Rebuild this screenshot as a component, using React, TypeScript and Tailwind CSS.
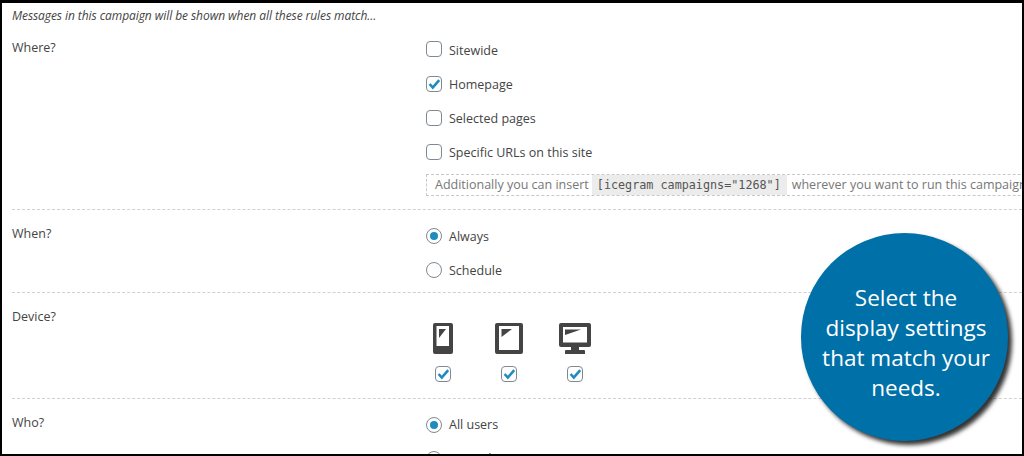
const font = { fontFamily: '"Open Sans", "Noto Sans", sans-serif' };

function Box({ checked }: { checked?: boolean }) {
  return (
    <span className="relative block w-4 h-4 shrink-0 rounded-[4px] border border-[#7e8993] bg-white">
      {checked && (
        <svg viewBox="0 0 16 16" className="absolute -left-px -top-px w-4 h-4">
          <path d="M3.6 8 L6.8 11.6 L13.2 4.2" fill="none" stroke="#1e8cbe" strokeWidth="2.6" />
        </svg>
      )}
    </span>
  );
}

function Radio({ checked }: { checked?: boolean }) {
  return (
    <span className="flex items-center justify-center w-4 h-4 shrink-0 rounded-full border border-[#7e8993] bg-white">
      {checked && <span className="block w-2 h-2 rounded-full bg-[#1e8cbe]" />}
    </span>
  );
}

function Opt({ label, children, textClass = "pt-[2px]", rowClass = "h-[34px]" }: { label: string; children: React.ReactNode; textClass?: string; rowClass?: string }) {
  return (
    <div className={`flex items-center gap-[7px] ${rowClass}`}>
      {children}
      <span className={textClass}>{label}</span>
    </div>
  );
}

function Row({ label, children, className, labelClass = "pt-[6px]" }: { label: string; children: React.ReactNode; className: string; labelClass?: string }) {
  return (
    <div className={`flex border-b border-dashed border-[#d0d0d0] ${className}`}>
      <div className={`w-[414px] shrink-0 ${labelClass}`}>{label}</div>
      <div className="min-w-0 flex-1">{children}</div>
    </div>
  );
}

export default function App() {
  return (
    <div
      style={font}
      className="relative w-[1024px] h-[456px] overflow-hidden bg-white border-2 border-t-[3px] border-black text-[12.5px] leading-[18px] text-[#444]"
    >
      <div className="w-[1100px] pl-[10px]">
        <div className="pt-[4px] h-[28px] italic text-[12px] tracking-[-0.07px]">Messages in this campaign will be shown when all these rules match...</div>
        <Row label="Where?" className="h-[179px] pt-px" labelClass="pt-[7px]">
          <Opt label="Sitewide" textClass="pt-[4px]" rowClass="h-[35px] pb-px"><Box /></Opt>
          <Opt label="Homepage"><Box checked /></Opt>
          <Opt label="Selected pages"><Box /></Opt>
          <Opt label="Specific URLs on this site"><Box /></Opt>
          <div className="mt-[5px] flex items-center h-[22px] w-[700px] border border-dashed border-[#c8c8c8] pl-[8px] text-[#777] whitespace-nowrap">
            Additionally you can insert
            <code className="ml-[3px] mr-[5px] pl-[5px] pr-[6px] h-[20px] leading-[20px] bg-[#ececec] text-[#555] text-[11.75px]" style={{ fontFamily: '"DejaVu Sans Mono", monospace' }}>
              [icegram campaigns="1268"]
            </code>
            wherever you want to run this campaign.
          </div>
        </Row>
        <Row label="When?" className="h-[83px] pt-[9px]">
          <Opt label="Always"><Radio checked /></Opt>
          <Opt label="Schedule"><Radio /></Opt>
        </Row>
        <Row label="Device?" className="h-[106px] pt-[9px]">
          <div className="flex pt-[21px] pl-[7px]">
            <div className="flex flex-col items-center w-[20px]">
              <svg viewBox="0 0 20 31" className="w-[20px] h-[31px]">
                <path fillRule="evenodd" fill="#444" d="M2 0H18Q20 0 20 2V29Q20 31 18 31H2Q0 31 0 29V2Q0 0 2 0ZM3.5 3V23H16V3Z" />
                <path fill="#444" d="M6 6H13L6 15Z" />
              </svg>
              <span className="mt-[12px]"><Box checked /></span>
            </div>
            <div className="flex flex-col items-center w-[28px] ml-[42px]">
              <svg viewBox="0 0 28 31" className="w-[28px] h-[31px]">
                <path fillRule="evenodd" fill="#444" d="M2 0H26Q28 0 28 2V29Q28 31 26 31H2Q0 31 0 29V2Q0 0 2 0ZM4 3V27H24V3Z" />
                <path fill="#444" d="M6.5 6H17L6.5 14Z" />
              </svg>
              <span className="mt-[12px]"><Box checked /></span>
            </div>
            <div className="flex flex-col items-center w-[32px] ml-[36px]">
              <svg viewBox="0 0 32 31" className="w-[32px] h-[31px]">
                <path fillRule="evenodd" fill="#444" d="M2 0H30Q32 0 32 2V22Q32 24 30 24H20V27H25Q26 27 26 28V31H6V28Q6 27 7 27H12V24H2Q0 24 0 22V2Q0 0 2 0ZM4 4V19.5H28V4Z" />
                <path fill="#444" d="M6 6.5H22L6 12Z" />
              </svg>
              <span className="mt-[12px]"><Box checked /></span>
            </div>
          </div>
        </Row>
        <div className="flex">
          <div className="w-[414px] shrink-0 pt-[15px]">Who?</div>
          <div className="pt-[9px]">
            <Opt label="All users" textClass="pt-0"><Radio checked /></Opt>
            <Opt label="Logged in users" textClass="pt-0"><Radio /></Opt>
          </div>
        </div>
      </div>

      <div
        className="absolute left-[799px] top-[230px] w-[207px] h-[208px] pt-[11px] pl-[3px] rounded-full bg-[#0070a8] shadow-[4px_4px_4px_rgba(0,0,0,0.8)] flex items-center justify-center text-center text-white text-[22.5px] leading-[30px]"
      >
        <span>Select the<br />display settings<br />that match your<br />needs.</span>
      </div>
    </div>
  );
}
